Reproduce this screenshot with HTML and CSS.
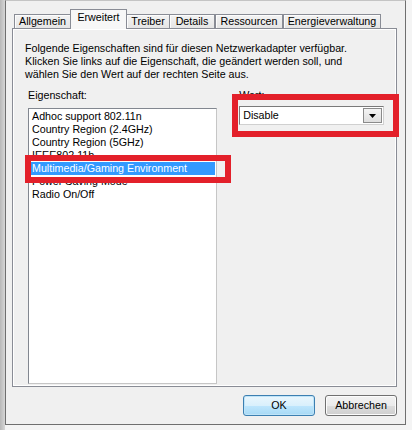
FILE: index.html
```html
<!DOCTYPE html>
<html>
<head>
<meta charset="utf-8">
<link rel="stylesheet" href="styles.css">
</head>
<body>
<div class="shade-left"></div>
<div class="frame">
  <div class="tabs">
    <div class="tab t-allg">Allgemein</div>
    <div class="tab sel t-erw">Erweitert</div>
    <div class="tab t-treib">Treiber</div>
    <div class="tab t-det">Details</div>
    <div class="tab t-res">Ressourcen</div>
    <div class="tab t-ener">Energieverwaltung</div>
  </div>
  <div class="panel">
    <p class="intro">Folgende Eigenschaften sind für diesen Netzwerkadapter verfügbar.<br>Klicken Sie links auf die Eigenschaft, die geändert werden soll, und<br>wählen Sie den Wert auf der rechten Seite aus.</p>
    <div class="cols">
      <div class="col-left">
        <div class="label">Eigenschaft:</div>
        <div class="listbox">
          <div class="item">Adhoc support 802.11n</div>
          <div class="item">Country Region (2.4GHz)</div>
          <div class="item">Country Region (5GHz)</div>
          <div class="item">IEEE802.11b</div>
          <div class="item selected">Multimedia/Gaming Environment</div>
          <div class="item">Power Saving Mode</div>
          <div class="item">Radio On/Off</div>
        </div>
      </div>
      <div class="col-right">
        <div class="label">Wert:</div>
        <div class="combo">
          <span class="combo-text">Disable</span>
          <div class="drop"><svg width="7" height="4" viewBox="0 0 7 4"><path d="M0 0H7L3.5 4Z" fill="#000"/></svg></div>
        </div>
      </div>
    </div>
  </div>
  <div class="buttons">
    <div class="btn default">OK</div>
    <div class="btn">Abbrechen</div>
  </div>
</div>
<div class="mark mark-list"></div>
<div class="mark mark-value"></div>
</body>
</html>
```

FILE: styles.css
```css
html, body {
  margin: 0;
  padding: 0;
}
body {
  width: 412px;
  height: 430px;
  overflow: hidden;
  background: #f4f4f4;
  font-family: "Liberation Sans", Arial, sans-serif;
  font-size: 10.7px;
  color: #000;
  position: relative;
}
.shade-left {
  position: absolute;
  left: 0;
  top: 0;
  width: 5px;
  height: 430px;
  background: linear-gradient(90deg, #b8b8b8, #d6d6d6);
}
.frame {
  margin-left: 5px;
  width: 401px;
  height: 425px;
  box-sizing: border-box;
  border: 1px solid #6f6f6f;
  border-top-color: #c4c4c4;
  background: #f0f0f0;
  display: flex;
  flex-direction: column;
  position: relative;
}
.tabs {
  display: flex;
  align-items: flex-end;
  height: 19px;
  margin: 8px 0 0 8px;
  position: relative;
  z-index: 2;
}
.tab {
  box-sizing: border-box;
  height: 14px;
  border: 1px solid #898c95;
  border-bottom: none;
  background: linear-gradient(#f3f3f3, #e5e5e5);
  box-shadow: inset 1px 1px 0 #fcfcfc;
  text-align: center;
  line-height: 13px;
  margin-right: -1px;
  white-space: nowrap;
}
.tab.sel {
  height: 20px;
  margin-bottom: -1px;
  background: #f7f7f7;
  box-shadow: none;
  line-height: 14px;
  position: relative;
  z-index: 3;
}
.t-allg { width: 57px; }
.t-erw { width: 57px; }
.t-treib { width: 44px; }
.t-det { width: 46px; }
.t-res { width: 68px; margin-left: 1px; }
.t-ener { width: 98px; margin-left: 1px; }
.panel {
  margin-left: 6px;
  width: 385px;
  height: 359px;
  box-sizing: border-box;
  border: 1px solid #898c95;
  box-shadow: inset 1px 1px 0 #fff, inset -1px -1px 0 #fff;
  background: #f0f0f0;
  padding: 13px 12px 2px 12px;
  display: flex;
  flex-direction: column;
}
.intro {
  margin: 0;
  line-height: 13px;
}
.cols {
  display: flex;
  margin-top: 8px;
  flex: 1;
  min-height: 0;
}
.col-left {
  display: flex;
  flex-direction: column;
  margin-left: 3px;
  width: 192px;
}
.col-right {
  display: flex;
  flex-direction: column;
  margin-left: 22px;
  width: 147px;
}
.label {
  line-height: 13px;
  height: 13px;
  margin-bottom: 6px;
}
.listbox {
  flex: 1;
  background: #fff;
  border: 1px solid #828790;
  border-right-color: #c6c6c6;
  border-bottom-color: #c6c6c6;
  padding: 1px;
}
.item {
  height: 13px;
  line-height: 13px;
  padding-left: 2px;
  white-space: nowrap;
}
.item.selected {
  background: #3399ff;
  color: #fff;
}
.combo {
  margin-top: -2px;
  height: 19px;
  box-sizing: border-box;
  border: 1px solid #7a7a7a;
  border-right-color: #d0d0d0;
  border-bottom-color: #d0d0d0;
  background: #fff;
  display: flex;
  align-items: center;
  justify-content: space-between;
  padding: 0 1px 0 3px;
}
.combo-text {
  line-height: 13px;
}
.drop {
  width: 19px;
  height: 15px;
  box-sizing: border-box;
  border: 1px solid #8a8a8a;
  background: linear-gradient(#f4f4f4, #dedede);
  display: flex;
  align-items: center;
  justify-content: center;
}
.buttons {
  display: flex;
  justify-content: flex-end;
  gap: 10px;
  margin-top: 8px;
  padding-right: 8px;
}
.btn {
  width: 72px;
  height: 21px;
  box-sizing: border-box;
  border: 1px solid #707070;
  border-radius: 3px;
  background: linear-gradient(#f2f2f2 0%, #ebebeb 50%, #dddddd 51%, #cfcfcf 100%);
  box-shadow: inset 0 0 0 1px #fcfcfc;
  display: flex;
  align-items: center;
  justify-content: center;
  line-height: 13px;
}
.btn.default {
  border-color: #3c7fb1;
  background: linear-gradient(#eaf6fd 0%, #d9f0fc 50%, #bee6fd 51%, #a7d9f5 100%);
  box-shadow: inset 0 0 0 1px #bfe4f8;
}
.mark {
  position: absolute;
  border: 6px solid #e3202a;
  box-sizing: border-box;
}
.mark-list {
  left: 25px;
  top: 155px;
  width: 206px;
  height: 28px;
}
.mark-value {
  left: 232px;
  top: 94px;
  width: 167px;
  height: 43px;
}
```
